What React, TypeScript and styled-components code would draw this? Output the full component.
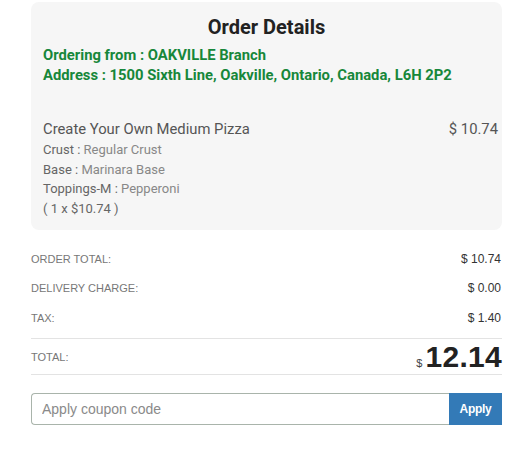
import React from 'react';
import styled, { createGlobalStyle } from 'styled-components';

const GlobalStyle = createGlobalStyle`
  body {
    margin: 0;
    background: #ffffff;
    font-family: "Liberation Sans", Arial, sans-serif;
  }
`;

const Page = styled.div`
  width: 471px;
  padding: 2px 0 0 31px;
`;

const Card = styled.div`
  background: #f6f6f6;
  border-radius: 8px;
  padding: 13px 4px 11px 12px;
  font-family: Roboto, "Open Sans", sans-serif;
`;

const Title = styled.h2`
  margin: 0 0 6px;
  padding-right: 8px;
  text-align: center;
  font-size: 20px;
  font-weight: 700;
  color: #222;
  line-height: 24px;
`;

const Branch = styled.div`
  color: #17873a;
  font-weight: 700;
  font-size: 14.8px;
  line-height: 20px;
`;

const Item = styled.div`
  display: flex;
  justify-content: space-between;
  margin-top: 34px;
`;

const ItemInfo = styled.div`
  display: flex;
  flex-direction: column;
`;

const ItemName = styled.div`
  font-size: 14.8px;
  color: #555;
  line-height: 20px;
  margin-bottom: 1px;
`;

const ItemPrice = styled.div`
  font-size: 14.8px;
  color: #555;
  line-height: 20px;
`;

const Option = styled.div`
  font-size: 13px;
  line-height: 19.7px;
  color: #666;
  span {
    color: #888;
  }
`;

const Summary = styled.div`
  margin-top: 14px;
`;

const Row = styled.div`
  display: flex;
  justify-content: space-between;
  align-items: center;
  height: 29.5px;
  font-size: 11px;
  color: #777;
  text-transform: uppercase;
`;

const Value = styled.span`
  color: #333;
  font-size: 12px;
  padding-right: 1px;
  text-transform: none;
`;

const TotalRow = styled.div`
  display: flex;
  justify-content: space-between;
  align-items: center;
  height: 35px;
  margin-top: 6px;
  border-top: 1px solid #e3e3e3;
  border-bottom: 1px solid #e3e3e3;
  font-size: 11px;
  color: #777;
`;

const Big = styled.span`
  display: flex;
  align-items: baseline;
  color: #222;
  small {
    font-size: 11px;
    color: #444;
    margin-right: 3px;
  }
  b {
    font-size: 30px;
    font-weight: 700;
    letter-spacing: 0.3px;
  }
`;

const Coupon = styled.div`
  display: flex;
  margin-top: 18px;
  height: 32px;
`;

const Input = styled.input`
  flex: 1;
  border: 1px solid #a9b4ab;
  border-right: none;
  border-radius: 4px 0 0 4px;
  padding: 0 10px;
  font-size: 14px;
  font-family: "Liberation Sans", Arial, sans-serif;
  color: #333;
  outline: none;
  &::placeholder {
    color: #8a8a8a;
  }
`;

const ApplyButton = styled.button`
  width: 53px;
  border: none;
  background: #337ab7;
  color: #fff;
  font-family: "Liberation Sans", Arial, sans-serif;
  font-size: 12px;
  font-weight: 700;
  letter-spacing: -0.3px;
`;

export default function App() {
  return (
    <>
      <GlobalStyle />
      <Page>
        <Card>
          <Title>Order Details</Title>
          <Branch>Ordering from : OAKVILLE Branch</Branch>
          <Branch>Address : 1500 Sixth Line, Oakville, Ontario, Canada, L6H 2P2</Branch>
          <Item>
            <ItemInfo>
              <ItemName>Create Your Own Medium Pizza</ItemName>
              <Option>Crust : <span>Regular Crust</span></Option>
              <Option>Base : <span>Marinara Base</span></Option>
              <Option>Toppings-M : <span>Pepperoni</span></Option>
              <Option>( 1 x $10.74 )</Option>
            </ItemInfo>
            <ItemPrice>$ 10.74</ItemPrice>
          </Item>
        </Card>
        <Summary>
          <Row>Order Total:<Value>$ 10.74</Value></Row>
          <Row>Delivery Charge:<Value>$ 0.00</Value></Row>
          <Row>Tax:<Value>$ 1.40</Value></Row>
        </Summary>
        <TotalRow>
          TOTAL:
          <Big><small>$</small><b>12.14</b></Big>
        </TotalRow>
        <Coupon>
          <Input placeholder="Apply coupon code" />
          <ApplyButton>Apply</ApplyButton>
        </Coupon>
      </Page>
    </>
  );
}
